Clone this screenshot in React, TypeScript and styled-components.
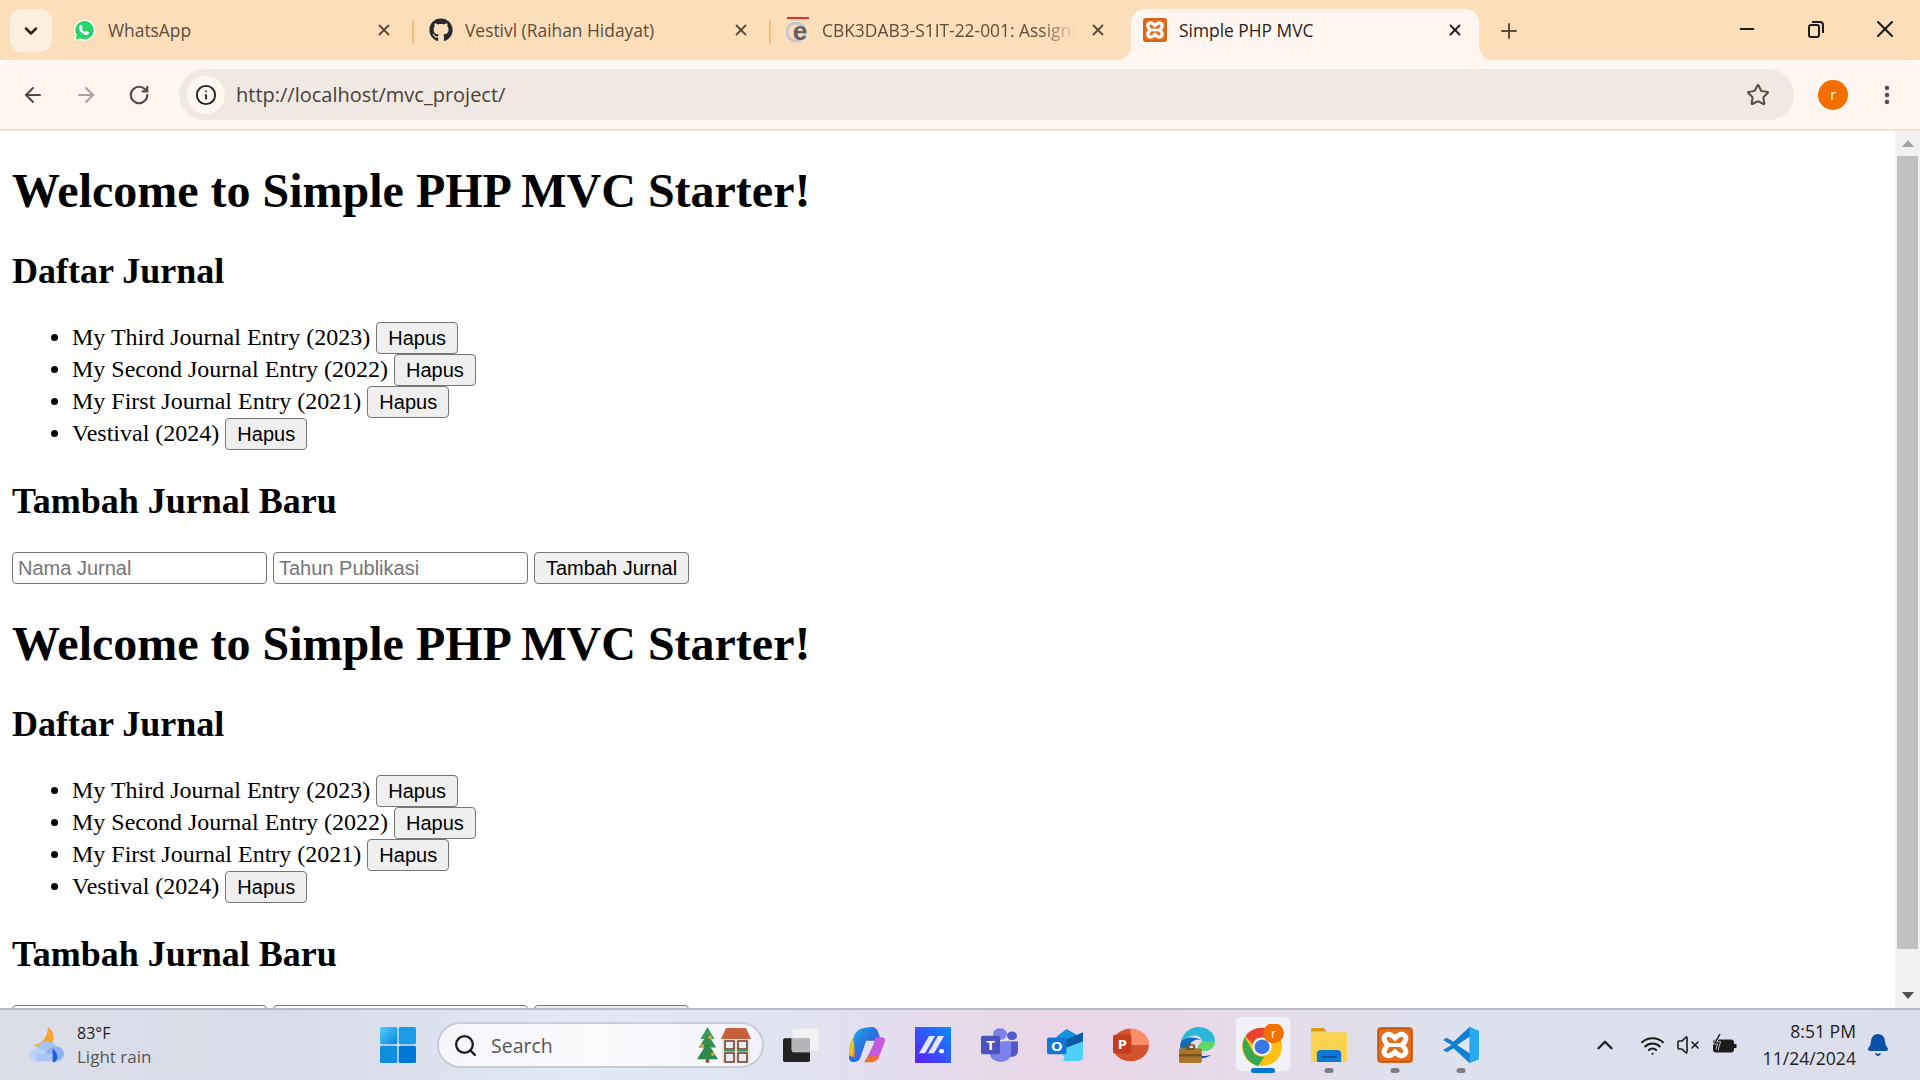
import type { ReactNode } from 'react'
import styled, { createGlobalStyle } from 'styled-components'
import { FaGithub } from 'react-icons/fa'
import {
  ArrowLeft,
  ArrowRight,
  RotateCw,
  Info,
  Star,
  EllipsisVertical,
  X,
  Plus,
  Minus,
  ChevronDown,
  ChevronUp,
  Search,
  Wifi,
  VolumeX,
  Bell,
} from 'lucide-react'

const GlobalStyle = createGlobalStyle`
  html, body {
    margin: 0;
    padding: 0;
    height: 100%;
    overflow: hidden;
  }
`

const Screen = styled.div`
  width: 1920px;
  height: 1080px;
  display: flex;
  flex-direction: column;
  overflow: hidden;
  background: #fff;
`

const TabStrip = styled.div`
  height: 60px;
  flex: none;
  display: flex;
  align-items: flex-end;
  background: #fddebb;
  padding-left: 10px;
  font-family: 'Open Sans', 'Noto Sans', sans-serif;
`

const TabSearch = styled.button`
  width: 42px;
  height: 43px;
  margin: 0 8px 8px 0;
  border: none;
  border-radius: 12px;
  background: #feefe0;
  color: #2f2418;
  display: flex;
  align-items: center;
  justify-content: center;
  padding: 0;
`

const Tab = styled.div<{ $active?: boolean; $sep?: boolean }>`
  position: relative;
  width: 348px;
  height: 51px;
  flex: none;
  box-sizing: border-box;
  display: flex;
  align-items: flex-start;
  padding: 9px 14px 0 12px;
  gap: 12px;
  margin-right: ${p => (p.$active ? '0' : '9px')};
  border-radius: 14px 14px 0 0;
  background: ${p => (p.$active ? '#fff6f2' : 'transparent')};
  color: ${p => (p.$active ? '#2b2119' : '#5d4c3a')};

  ${p =>
    p.$sep &&
    `&::after {
      content: '';
      position: absolute;
      right: -6px;
      top: 11px;
      width: 2px;
      height: 24px;
      background: #f6bd78;
    }`}

  ${p =>
    p.$active &&
    `&::before, &::after {
      content: '';
      position: absolute;
      bottom: 0;
      width: 15px;
      height: 15px;
    }
    &::before {
      left: -15px;
      background: radial-gradient(circle at 0 0, transparent 15px, #fff6f2 15.5px);
    }
    &::after {
      right: -15px;
      background: radial-gradient(circle at 100% 0, transparent 15px, #fff6f2 15.5px);
    }`}
`

const Favicon = styled.span<{ $color: string }>`
  width: 24px;
  height: 24px;
  flex: none;
  display: flex;
  align-items: center;
  justify-content: center;
  color: ${p => p.$color};
`

const TabTitle = styled.span<{ $fade?: boolean }>`
  flex: 1;
  min-width: 0;
  font-size: 17.4px;
  line-height: 24px;
  white-space: nowrap;
  overflow: hidden;
  ${p =>
    p.$fade &&
    `-webkit-mask-image: linear-gradient(to right, #000 86%, transparent 100%);
     mask-image: linear-gradient(to right, #000 86%, transparent 100%);`}
`

const TabClose = styled.span`
  width: 20px;
  height: 24px;
  flex: none;
  display: flex;
  align-items: center;
  justify-content: center;
`

const NewTab = styled.span`
  width: 30px;
  height: 30px;
  margin: 0 0 14px 15px;
  color: #5d4c3a;
  display: flex;
  align-items: center;
  justify-content: center;
`

const WindowControls = styled.div`
  margin-left: auto;
  align-self: flex-start;
  display: flex;
  padding: 14px 20px 0 0;
  gap: 39px;
  color: #1c1c1c;
`

const WindowButton = styled.span`
  width: 30px;
  height: 30px;
  display: flex;
  align-items: center;
  justify-content: center;
`

const Toolbar = styled.div`
  height: 71px;
  flex: none;
  display: flex;
  align-items: center;
  box-sizing: border-box;
  background: #fff6f2;
  border-bottom: 2px solid #f2e2d6;
  border-radius: 10px 10px 0 0;
  padding: 0 20px;
  color: #5b4a3b;
`

const NavButton = styled.span<{ $dim?: boolean; $gap?: number }>`
  width: 26px;
  height: 26px;
  flex: none;
  margin-right: ${p => p.$gap ?? 27}px;
  display: flex;
  align-items: center;
  justify-content: center;
  color: ${p => (p.$dim ? '#a9a29b' : '#5b4a3b')};
`

const Omnibox = styled.div`
  width: 1615px;
  height: 51px;
  flex: none;
  box-sizing: border-box;
  display: flex;
  align-items: center;
  border-radius: 26px;
  background: #f0e8e2;
  padding: 0 24px 0 8px;
  margin-left: 1px;
`

const SiteInfo = styled.span`
  width: 38px;
  height: 38px;
  flex: none;
  border-radius: 50%;
  background: #fff6f2;
  color: #1f1f1f;
  display: flex;
  align-items: center;
  justify-content: center;
`

const Url = styled.span`
  flex: 1;
  margin-left: 11px;
  font-family: 'Open Sans', 'Noto Sans', sans-serif;
  font-size: 20px;
  color: #4a4036;
`

const Avatar = styled.span`
  width: 30px;
  height: 30px;
  flex: none;
  margin-left: 24px;
  border-radius: 50%;
  background: #f36f00;
  color: #fff;
  font-family: 'Open Sans', sans-serif;
  font-size: 14px;
  display: flex;
  align-items: center;
  justify-content: center;
`

const MenuButton = styled.span`
  margin-left: 27px;
  display: flex;
  color: #5b4a3b;
`

const Viewport = styled.div`
  flex: 1;
  min-height: 0;
  display: flex;
`

const Page = styled.main`
  flex: 1;
  min-width: 0;
  overflow: hidden;
  padding: 0 12px;
  color: #000;
  font-family: 'Liberation Serif', serif;
  font-size: 24px;
`

const Title = styled.h1`
  font-size: 48px;
  margin: 32px 0;
`

const SubTitle = styled.h2`
  font-size: 36px;
  margin: 30px 0;
`

const JournalList = styled.ul`
  margin: 30px 0;
  padding-left: 60px;
`

const NativeButton = styled.button`
  font-family: 'Liberation Sans', sans-serif;
  font-size: 20px;
  height: 32px;
  padding: 0 11px;
  color: #000;
  background: #efefef;
  border: 1px solid #767676;
  border-radius: 4px;
  box-sizing: border-box;
`

const JournalForm = styled.form`
  display: block;
`

const TextInput = styled.input`
  font-family: 'Liberation Sans', sans-serif;
  font-size: 20px;
  width: 255px;
  height: 32px;
  padding: 1px 5px;
  box-sizing: border-box;
  border: 1px solid #767676;
  border-radius: 4px;
  margin-right: 6px;

  &::placeholder {
    color: #757575;
  }
`

const Scrollbar = styled.div`
  width: 25px;
  flex: none;
  display: flex;
  flex-direction: column;
  background: #f1f1f1;
`

const ScrollArrow = styled.span<{ $down?: boolean }>`
  height: 25px;
  flex: none;
  display: flex;
  align-items: center;
  justify-content: center;
  ${p => p.$down && 'margin-top: auto;'}

  &::before {
    content: '';
    border-left: 6px solid transparent;
    border-right: 6px solid transparent;
    ${p =>
      p.$down ? 'border-top: 7px solid #505050;' : 'border-bottom: 7px solid #a3a3a3;'}
  }
`

const ScrollThumb = styled.span`
  height: 793px;
  margin: 0 2px;
  background: #c1c1c1;
`

const Taskbar = styled.footer`
  height: 72px;
  flex: none;
  box-sizing: border-box;
  display: flex;
  align-items: center;
  border-top: 2px solid #b9bbc6;
  background: linear-gradient(
    90deg,
    #dcdfea 0%,
    #d9dce8 15%,
    #e2e8f5 30%,
    #e0e4f2 40%,
    #e9d6e8 55%,
    #e6dbea 65%,
    #dee1ee 75%,
    #dcdfeb 100%
  );
  font-family: 'Open Sans', 'Noto Sans', sans-serif;
`

const Weather = styled.div`
  width: 380px;
  flex: none;
  box-sizing: border-box;
  padding-left: 29px;
  display: flex;
  align-items: center;
  gap: 12px;
`

const WeatherText = styled.div`
  font-size: 16px;
  line-height: 23px;
  color: #1c1c1c;
`

const WeatherSub = styled.div`
  color: #555;
  font-size: 17px;
`

const StartSlot = styled.span`
  width: 36px;
  height: 36px;
  flex: none;
  margin-right: 21px;
`

const SearchPill = styled.div`
  width: 327px;
  height: 46px;
  flex: none;
  box-sizing: border-box;
  border: 2px solid #c9cbd8;
  border-radius: 23px;
  background: linear-gradient(90deg, #f6f6fb, #fbfbfe 50%, #f2f3fa);
  padding: 0 11px 0 14px;
  display: flex;
  align-items: center;
  font-size: 19.5px;
  color: #555;
  gap: 13px;
`

const SearchText = styled.span`
  flex: 1;
`

const TaskIcons = styled.div`
  display: flex;
  align-items: center;
  margin-left: 4px;
`

const TaskIcon = styled.span<{ $active?: boolean; $running?: boolean }>`
  position: relative;
  width: 66px;
  height: 62px;
  flex: none;
  box-sizing: border-box;
  display: flex;
  align-items: center;
  justify-content: center;

  ${p =>
    p.$active &&
    `&::before {
      content: '';
      position: absolute;
      left: 5px;
      right: 5px;
      top: 2px;
      bottom: 4px;
      border: 1px solid #e3e3ee;
      border-radius: 6px;
      background: #f2f1f8;
    }`}

  ${p =>
    (p.$active || p.$running) &&
    `&::after {
      content: '';
      position: absolute;
      bottom: 3px;
      left: 50%;
      height: 5px;
      border-radius: 3px;
      transform: translateX(-50%);
      width: ${p.$active ? '24px' : '9px'};
      background: ${p.$active ? '#0078d4' : '#7d7d85'};
    }`}

  & > svg {
    position: relative;
    z-index: 1;
  }
`

const Tray = styled.div`
  margin-left: auto;
  display: flex;
  align-items: center;
  color: #1c1c1c;
  padding-right: 30px;
`

const TrayIcon = styled.span<{ $gap: number }>`
  display: flex;
  margin-right: ${p => p.$gap}px;
`

const Clock = styled.div`
  text-align: right;
  font-size: 17.6px;
  line-height: 27px;
  color: #1c1c1c;
  margin-right: 10px;
`

function WhatsAppIcon () {
  return (
    <svg width="24" height="24" viewBox="0 0 24 24">
      <path d="M2 23l1.6-5.6A10.6 10.6 0 1 1 7.6 21.4z" fill="#fff" />
      <path d="M3.6 21.4l1.2-4.2A9.2 9.2 0 1 1 8 20.2z" fill="#25d366" />
      <path
        d="M8.8 6.8c.4 0 .8 0 1 .6l.8 2c.1.3 0 .6-.2.8l-.6.8c.6 1.3 1.8 2.4 3.2 3.1l.8-.9c.2-.3.5-.3.8-.2l2 .9c.4.2.5.5.4.9-.2 1.3-1.4 2.1-2.7 2.1-3.7-.3-7-3.5-7.3-7.2 0-1.2.7-2.5 1.8-2.9z"
        fill="#fff"
      />
    </svg>
  )
}

function WindowsLogo () {
  return (
    <svg width="36" height="36" viewBox="0 0 36 36">
      <defs>
        <linearGradient id="winA" x1="0" y1="0" x2="1" y2="1">
          <stop offset="0" stopColor="#4fd0ff" />
          <stop offset="1" stopColor="#0a84dc" />
        </linearGradient>
      </defs>
      <rect x="0" y="0" width="17.3" height="17.3" rx="1.5" fill="url(#winA)" />
      <rect x="18.7" y="0" width="17.3" height="17.3" rx="1.5" fill="#1a9be6" />
      <rect x="0" y="18.7" width="17.3" height="17.3" rx="1.5" fill="#0f8ee0" />
      <rect x="18.7" y="18.7" width="17.3" height="17.3" rx="1.5" fill="#0078d4" />
    </svg>
  )
}

function WeatherIcon () {
  return (
    <svg width="36" height="37" viewBox="0 0 38 44" preserveAspectRatio="none">
      <path d="M20 0c6 5 8 13 4 20-5 6-14 6-20 1 8 1 16-8 16-21z" fill="#f5a52f" />
      <ellipse cx="19" cy="28" rx="11" ry="11" fill="#a8c4f5" />
      <ellipse cx="9" cy="33" rx="9" ry="8" fill="#bcd2f8" />
      <ellipse cx="28" cy="32" rx="9" ry="9" fill="#8fb2f0" />
      <rect x="8" y="32" width="22" height="9" fill="#a9c4f5" />
      <path d="M25 25c3 4 5 7 5 10 0 4-2 7-5 7z" fill="#1a5fe0" />
    </svg>
  )
}

function TreeAndHouse () {
  return (
    <svg width="54" height="36" viewBox="0 0 54 36">
      <g transform="scale(0.875 0.85)">
        <rect x="10" y="36" width="4" height="6" fill="#8a5a30" />
        <polygon points="12,0 4,14 20,14" fill="#3d9a5a" />
        <polygon points="12,8 2,24 22,24" fill="#359050" />
        <polygon points="12,18 0,38 24,38" fill="#2f8a4a" />
        <circle cx="15" cy="12" r="2" fill="#e8a33a" />
        <circle cx="6" cy="22" r="2" fill="#e8a33a" />
        <circle cx="18" cy="32" r="2" fill="#e8a33a" />
      </g>
      <rect x="25" y="10" width="28" height="26" fill="#f1e1d4" />
      <polygon points="24,12 29,1 49,1 54,12" fill="#c7603a" />
      <rect x="28" y="14" width="9" height="8" fill="#e8ecef" stroke="#6a3a2a" strokeWidth="1.5" />
      <rect x="41" y="14" width="9" height="8" fill="#e8ecef" stroke="#6a3a2a" strokeWidth="1.5" />
      <rect x="28" y="26" width="9" height="9" fill="#e8ecef" stroke="#6a3a2a" strokeWidth="1.5" />
      <rect x="41" y="26" width="9" height="9" fill="#e8ecef" stroke="#6a3a2a" strokeWidth="1.5" />
      <rect x="27" y="22" width="11" height="2.5" fill="#2f9a5a" />
      <rect x="40" y="22" width="11" height="2.5" fill="#2f9a5a" />
    </svg>
  )
}

function TaskView () {
  return (
    <svg width="36" height="34" viewBox="0 0 36 40" preserveAspectRatio="none">
      <rect x="0" y="12" width="27" height="28" rx="2" fill="#222" />
      <rect x="9" y="0" width="27" height="28" rx="2" fill="#f2f2f6" stroke="#dcdce6" />
      <rect x="9" y="12" width="18" height="16" fill="#b5b5b8" />
    </svg>
  )
}

function Copilot () {
  return (
    <svg width="36" height="36" viewBox="0 0 38 42" preserveAspectRatio="none">
      <defs>
        <linearGradient id="copA" x1="0" y1="0" x2="1" y2="1">
          <stop offset="0" stopColor="#18b6e8" />
          <stop offset="0.5" stopColor="#2a6fe0" />
          <stop offset="1" stopColor="#7a3fd8" />
        </linearGradient>
        <linearGradient id="copB" x1="0" y1="0" x2="1" y2="1">
          <stop offset="0" stopColor="#a8d24a" />
          <stop offset="0.6" stopColor="#f4c42a" />
          <stop offset="1" stopColor="#f0702e" />
        </linearGradient>
      </defs>
      <path d="M24 0c4 0 6 3 7 7l3 9H18l-6 20c-1 3-3 5-7 5-4 0-6-4-5-9l5-20C7 4 13 0 24 0z" fill="url(#copA)" />
      <path d="M4 12c2 8 2 16 2 24l-6-3c-1-8 1-15 4-21z" fill="url(#copB)" />
      <path d="M16 40h6c6 0 9-3 11-9l5-14c1-4-2-5-5-5h-5l-2 8-7 16c-1 2-2 3-3 4z" fill="#c45ae0" />
      <path d="M16 41h7c5 0 8-3 9-7H20z" fill="#f0702e" />
    </svg>
  )
}

function MApp () {
  return (
    <svg width="36" height="36" viewBox="0 0 36 44" preserveAspectRatio="none">
      <defs>
        <linearGradient id="mA" x1="0" y1="1" x2="1" y2="0">
          <stop offset="0" stopColor="#5b1fff" />
          <stop offset="1" stopColor="#0a8cff" />
        </linearGradient>
      </defs>
      <rect width="36" height="44" fill="url(#mA)" />
      <polygon points="4,32 10,32 20,11 14,11" fill="#e6e8ff" />
      <polygon points="13,32 19,32 29,11 23,11" fill="#e6e8ff" />
      <rect x="24" y="27" width="5" height="5" rx="2" fill="#fff" />
    </svg>
  )
}

function Teams () {
  return (
    <svg width="37" height="34" viewBox="0 0 37 40" preserveAspectRatio="none">
      <circle cx="19" cy="7" r="7" fill="#7b83eb" />
      <circle cx="31" cy="9" r="5" fill="#5059c9" />
      <path d="M22 16h15v11c0 4-3 7-7 7-2 0-4-1-5-2z" fill="#5059c9" />
      <path d="M9 16h21v15c0 5-5 9-10 9-6 0-11-4-11-9z" fill="#7b83eb" />
      <rect x="0" y="9" width="19" height="22" rx="2" fill="#4b53bc" />
      <text x="9.5" y="26" textAnchor="middle" fontFamily="Open Sans" fontSize="15" fontWeight="700" fill="#fff">T</text>
    </svg>
  )
}

function Outlook () {
  return (
    <svg width="36" height="32" viewBox="0 0 37 38" preserveAspectRatio="none">
      <path d="M20 0l14 9v6H10V9z" fill="#1490df" />
      <polygon points="14,15 37,4 37,15 14,25" fill="#0a5ca8" />
      <path d="M14 25l23-10v18c0 3-2 5-5 5H12c2 0 6 0 6-4z" fill="#4fd0f8" />
      <rect x="0" y="10" width="20" height="20" rx="2" fill="#0f78d4" />
      <text x="10" y="26" textAnchor="middle" fontFamily="Open Sans" fontSize="15" fontWeight="700" fill="#fff">O</text>
    </svg>
  )
}

function PowerPoint () {
  return (
    <svg width="36" height="34" viewBox="0 0 37 40" preserveAspectRatio="none">
      <circle cx="18" cy="20" r="19" fill="#d35230" />
      <path d="M18 1a19 19 0 0 1 19 19H18z" fill="#ff8f6b" />
      <rect x="0" y="8" width="19" height="22" rx="2" fill="#c43e1c" />
      <text x="9.5" y="25" textAnchor="middle" fontFamily="Open Sans" fontSize="15" fontWeight="700" fill="#fff">P</text>
    </svg>
  )
}

function Edge () {
  return (
    <svg width="36" height="36" viewBox="0 0 38 44" preserveAspectRatio="none">
      <path d="M2 18C4 7 12 0 21 0c10 0 17 8 17 17 0 7-5 12-11 12-4 0-7-2-7-5 0-3 4-3 4-7 0-5-6-8-11-6-6 2-9 6-11 7z" fill="#2ab8d8" />
      <path d="M24 17c6 1 14 0 14 0 0 7-5 12-11 12-4 0-7-2-7-5 0-3 4-3 4-7z" fill="#5fd86a" />
      <path d="M2 18c-2 8 0 14 4 19h8c-3-5-4-12-1-18 2-3 6-5 10-3-5-5-17-4-21 2z" fill="#0a6fc0" />
      <path d="M14 37c6 3 14 2 20-3-3 1-10 3-16 0z" fill="#0c59a4" />
      <rect x="0" y="26" width="24" height="18" rx="2" fill="#a8752a" />
      <rect x="0" y="33" width="24" height="3" fill="#7a5218" />
      <rect x="8" y="22" width="8" height="5" rx="1" fill="none" stroke="#7a5218" strokeWidth="2" />
    </svg>
  )
}

function Chrome () {
  return (
    <svg width="42" height="42" viewBox="0 0 44 46" preserveAspectRatio="none">
      <g transform="translate(0 4)">
        <circle cx="21" cy="21" r="21" fill="#fbc116" />
        <path d="M21 0a21 21 0 0 1 18.2 10.5H21a10.5 10.5 0 0 0-9.9 7L3.4 9.5A21 21 0 0 1 21 0z" fill="#ea4335" />
        <path d="M2.8 10.5L13 28.5a10.5 10.5 0 0 0 10.5 3L17 42C5 40-3 23 2.8 10.5z" fill="#34a853" />
        <circle cx="21" cy="21" r="10" fill="#fff" />
        <circle cx="21" cy="21" r="8" fill="#3b78e7" />
      </g>
      <circle cx="33" cy="10" r="11" fill="#f36f00" />
      <text x="33" y="15" textAnchor="middle" fontFamily="Open Sans" fontSize="13" fill="#fff">r</text>
    </svg>
  )
}

function Explorer () {
  return (
    <svg width="36" height="34" viewBox="0 0 37 40" preserveAspectRatio="none">
      <path d="M0 2c0-1 1-2 2-2h11l3 4h-16z" fill="#d99a00" />
      <rect x="0" y="5" width="37" height="35" rx="1" fill="#fbd34e" />
      <path d="M6 40V30c0-3 2-4 4-4h17c2 0 4 1 4 4v10z" fill="#0f78d4" />
      <rect x="11" y="33" width="15" height="2" fill="#0b4f91" />
    </svg>
  )
}

function XamppMark ({ size }: { size: number }) {
  return (
    <svg width={size} height={size} viewBox="0 0 36 36">
      <rect width="36" height="36" rx="4" fill="#e36f1e" />
      <rect x="1.5" y="1.5" width="33" height="33" rx="3" fill="none" stroke="#b8500f" />
      <path
        d="M9 8c3-2 6 0 9 3 3-3 6-5 9-3 3 2 2 6-1 9l-1 1 1 1c3 3 4 7 1 9-3 2-6 0-9-3-3 3-6 5-9 3-3-2-2-6 1-9l1-1-1-1C7 14 6 10 9 8z"
        fill="none"
        stroke="#fff"
        strokeWidth="5"
      />
      <rect x="13" y="16" width="11" height="4" fill="#fff" />
    </svg>
  )
}

function VsCode () {
  return (
    <svg width="36" height="36" viewBox="0 0 38 44" preserveAspectRatio="none">
      <path d="M28 0l10 5v34l-10 5-17-18-7 5-4-3 9-6-9-6 4-3 7 5z" fill="#0f7fcf" />
      <path d="M28 0l10 5v34l-10 5z" fill="#29a9ee" />
      <polygon points="28,12 28,32 15,22" fill="#e3e6f1" />
    </svg>
  )
}

function CourseIcon () {
  return (
    <svg width="24" height="26" viewBox="0 0 24 26">
      <rect x="1" y="0" width="22" height="2" fill="#e5302b" />
      <circle cx="10" cy="15" r="9" fill="none" stroke="#c4c8cc" strokeWidth="3" />
      <text x="14" y="23" textAnchor="middle" fontFamily="Liberation Sans" fontSize="26" fontWeight="700" fill="#5e6266">e</text>
    </svg>
  )
}

function TrayBattery () {
  return (
    <svg width="25" height="22" viewBox="0 0 25 22" fill="none">
      <rect x="1.5" y="6" width="20" height="12" rx="2" fill="#1c1c1c" stroke="#1c1c1c" />
      <rect x="22" y="10" width="2.5" height="4" fill="#1c1c1c" />
      <path d="M8 0L3 9h4l-2 7" stroke="#e0e3ee" strokeWidth="3" />
      <path d="M8 0L3 9h4l-2 7" stroke="#1c1c1c" strokeWidth="1.5" />
    </svg>
  )
}

type TabInfo = {
  title: string
  icon: ReactNode
  color: string
  active?: boolean
  sep?: boolean
  fade?: boolean
}

const tabs: TabInfo[] = [
  { title: 'WhatsApp', icon: <WhatsAppIcon />, color: '#25d366', sep: true },
  { title: 'Vestivl (Raihan Hidayat)', icon: <FaGithub size={24} />, color: '#24292f', sep: true },
  { title: 'CBK3DAB3-S1IT-22-001: Assignment', icon: <CourseIcon />, color: '#000', fade: true },
  { title: 'Simple PHP MVC', icon: <XamppMark size={24} />, color: '#000', active: true },
]

const journals = [
  'My Third Journal Entry (2023)',
  'My Second Journal Entry (2022)',
  'My First Journal Entry (2021)',
  'Vestival (2024)',
]

function JournalPage () {
  return (
    <>
      <Title>Welcome to Simple PHP MVC Starter!</Title>
      <SubTitle>Daftar Jurnal</SubTitle>
      <JournalList>
        {journals.map(item => (
          <li key={item}>
            {item} <NativeButton type="button">Hapus</NativeButton>
          </li>
        ))}
      </JournalList>
      <SubTitle>Tambah Jurnal Baru</SubTitle>
      <JournalForm onSubmit={e => e.preventDefault()}>
        <TextInput placeholder="Nama Jurnal" />
        <TextInput placeholder="Tahun Publikasi" />
        <NativeButton type="submit">Tambah Jurnal</NativeButton>
      </JournalForm>
    </>
  )
}

export default function App () {
  return (
    <Screen>
      <GlobalStyle />
      <TabStrip>
        <TabSearch>
          <ChevronDown size={20} strokeWidth={3} />
        </TabSearch>
        {tabs.map(tab => (
          <Tab key={tab.title} $active={tab.active} $sep={tab.sep}>
            <Favicon $color={tab.color}>{tab.icon}</Favicon>
            <TabTitle $fade={tab.fade}>{tab.title}</TabTitle>
            <TabClose>
              <X size={18} strokeWidth={2.5} />
            </TabClose>
          </Tab>
        ))}
        <NewTab>
          <Plus size={24} strokeWidth={2} />
        </NewTab>
        <WindowControls>
          <WindowButton>
            <Minus size={22} strokeWidth={2} />
          </WindowButton>
          <WindowButton>
            <svg width="18" height="18" viewBox="0 0 18 18" fill="none" stroke="#1c1c1c" strokeWidth="2">
              <rect x="2" y="5" width="10" height="12" rx="2" />
              <path d="M5 2h8c2 0 3 1 3 3v8" />
            </svg>
          </WindowButton>
          <WindowButton>
            <X size={28} strokeWidth={1.8} />
          </WindowButton>
        </WindowControls>
      </TabStrip>

      <Toolbar>
        <NavButton>
          <ArrowLeft size={24} />
        </NavButton>
        <NavButton $dim>
          <ArrowRight size={24} />
        </NavButton>
        <NavButton $gap={26}>
          <RotateCw size={22} strokeWidth={2.4} />
        </NavButton>
        <Omnibox>
          <SiteInfo>
            <Info size={22} />
          </SiteInfo>
          <Url>http://localhost/mvc_project/</Url>
          <Star size={24} />
        </Omnibox>
        <Avatar>r</Avatar>
        <MenuButton>
          <EllipsisVertical size={24} strokeWidth={2.5} />
        </MenuButton>
      </Toolbar>

      <Viewport>
        <Page>
          <JournalPage />
          <JournalPage />
        </Page>
        <Scrollbar>
          <ScrollArrow />
          <ScrollThumb />
          <ScrollArrow $down />
        </Scrollbar>
      </Viewport>

      <Taskbar>
        <Weather>
          <WeatherIcon />
          <WeatherText>
            83°F
            <WeatherSub>Light rain</WeatherSub>
          </WeatherText>
        </Weather>
        <StartSlot>
          <WindowsLogo />
        </StartSlot>
        <SearchPill>
          <Search size={25} color="#1c1c1c" strokeWidth={2.2} />
          <SearchText>Search</SearchText>
          <TreeAndHouse />
        </SearchPill>
        <TaskIcons>
          <TaskIcon><TaskView /></TaskIcon>
          <TaskIcon><Copilot /></TaskIcon>
          <TaskIcon><MApp /></TaskIcon>
          <TaskIcon><Teams /></TaskIcon>
          <TaskIcon><Outlook /></TaskIcon>
          <TaskIcon><PowerPoint /></TaskIcon>
          <TaskIcon><Edge /></TaskIcon>
          <TaskIcon $active><Chrome /></TaskIcon>
          <TaskIcon $running><Explorer /></TaskIcon>
          <TaskIcon $running><XamppMark size={36} /></TaskIcon>
          <TaskIcon $running><VsCode /></TaskIcon>
        </TaskIcons>
        <Tray>
          <TrayIcon $gap={22}>
            <ChevronUp size={26} strokeWidth={2.2} />
          </TrayIcon>
          <TrayIcon $gap={11}>
            <Wifi size={25} />
          </TrayIcon>
          <TrayIcon $gap={12}>
            <VolumeX size={24} strokeWidth={1.6} />
          </TrayIcon>
          <TrayIcon $gap={26}>
            <TrayBattery />
          </TrayIcon>
          <Clock>
            8:51 PM
            <br />
            11/24/2024
          </Clock>
          <TrayIcon $gap={0}>
            <Bell size={24} color="#0a4fa8" fill="#0a4fa8" />
          </TrayIcon>
        </Tray>
      </Taskbar>
    </Screen>
  )
}
